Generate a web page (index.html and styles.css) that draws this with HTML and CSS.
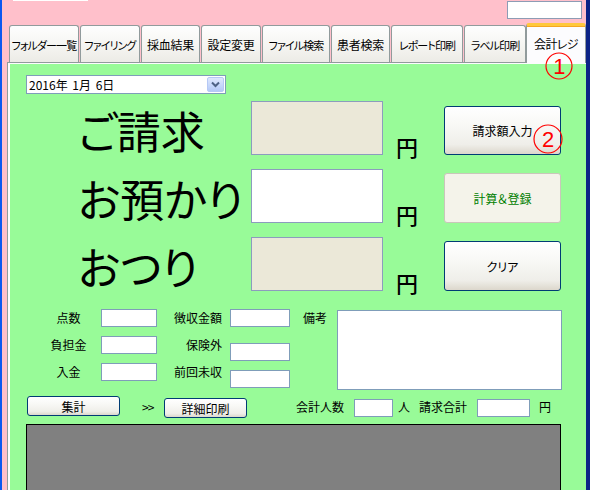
FILE: index.html
```html
<!DOCTYPE html>
<html lang="ja">
<head>
<meta charset="utf-8">
<title>会計レジ</title>
<link rel="stylesheet" href="styles.css">
</head>
<body>
<div class="frame-left"></div>
<div class="window">
  <div class="topbar">
    <div class="stub"></div>
    <div class="search"></div>
  </div>
  <div class="tabs">
    <div class="tab kana t1">フォルダー一覧</div>
    <div class="tab kana t2">ファイリング</div>
    <div class="tab t3">採血結果</div>
    <div class="tab t4">設定変更</div>
    <div class="tab kana t5">ファイル検索</div>
    <div class="tab t6">患者検索</div>
    <div class="tab kana t7">レポート印刷</div>
    <div class="tab kana t8">ラベル印刷</div>
    <div class="tab t9 active">会計レジ
      <svg class="mark mark1" width="30" height="30" viewBox="0 0 30 30"><circle cx="15" cy="15" r="13" fill="none" stroke="#f00" stroke-width="1.2"/><text x="15" y="23" text-anchor="middle" class="mark-num">1</text></svg>
    </div>
  </div>
  <div class="panel">
    <div class="datepick">
      <span class="date-text">2016年 1月 6日</span>
      <span class="drop"><svg width="15" height="13" viewBox="0 0 15 13"><polyline points="4,4.5 7.5,8 11,4.5" fill="none" stroke="#4d6185" stroke-width="2"/></svg></span>
    </div>

    <div class="register">
      <div class="big">ご請求</div>
      <div class="amount beige"></div>
      <div class="yen">円</div>
      <div class="btn big-btn b1">請求額入力
        <svg class="mark mark2" width="32" height="32" viewBox="0 0 32 32"><circle cx="16" cy="16" r="14" fill="none" stroke="#f00" stroke-width="1.2"/><text x="16" y="24" text-anchor="middle" class="mark-num">2</text></svg>
      </div>

      <div class="big">お預かり</div>
      <div class="amount white"></div>
      <div class="yen">円</div>
      <div class="btn big-btn disabled">計算＆登録</div>

      <div class="big">おつり</div>
      <div class="amount beige"></div>
      <div class="yen">円</div>
      <div class="btn big-btn">クリア</div>
    </div>

    <div class="details">
      <div class="lab-a">点数</div>
      <div class="field"></div>
      <div class="lab-b">徴収金額</div>
      <div class="field"></div>
      <div class="lab-c">備考</div>
      <div class="memo"></div>

      <div class="lab-a">負担金</div>
      <div class="field"></div>
      <div class="lab-b">保険外</div>
      <div class="field low"></div>

      <div class="lab-a">入金</div>
      <div class="field"></div>
      <div class="lab-b">前回未収</div>
      <div class="field low"></div>
    </div>

    <div class="bottom">
      <div class="btn small-btn sum">集計</div>
      <div class="arrows">&gt;&gt;</div>
      <div class="btn small-btn print">詳細印刷</div>
      <div class="txt count-lab">会計人数</div>
      <div class="field count"></div>
      <div class="txt person">人</div>
      <div class="txt total-lab">請求合計</div>
      <div class="field total"></div>
      <div class="txt total-yen">円</div>
    </div>

    <div class="grid-area"></div>
  </div>
</div>
<div class="frame-right"></div>
</body>
</html>
```

FILE: styles.css
```css
html, body {
  margin: 0;
  padding: 0;
}
body {
  width: 590px;
  height: 490px;
  overflow: hidden;
  display: flex;
  background: #ffc0cb;
  font-family: "Noto Sans CJK JP", "Noto Sans", sans-serif;
  font-size: 12px;
  color: #000;
}
.frame-left {
  width: 2px;
  background: #0b58f0;
  flex: none;
}
.frame-right {
  width: 4px;
  background: #0c2386;
  flex: none;
}
.window {
  flex: 1;
  display: flex;
  flex-direction: column;
  min-width: 0;
}
.topbar {
  height: 23px;
  display: flex;
  align-items: flex-start;
  flex: none;
}
.stub {
  margin-left: 11px;
  width: 75px;
  height: 1px;
  background: #fff;
}
.search {
  margin-left: auto;
  margin-right: 4px;
  margin-top: 1px;
  width: 75px;
  height: 18px;
  box-sizing: border-box;
  border: 1px solid #8d9cb5;
  background: #fff;
}
.tabs {
  height: 39px;
  flex: none;
  display: flex;
  align-items: flex-end;
  padding-left: 7px;
}
.tab {
  box-sizing: border-box;
  height: 37px;
  margin-right: 1px;
  border: 1px solid #919b9c;
  border-bottom: none;
  border-radius: 3px 3px 0 0;
  background: linear-gradient(180deg, #fefefe 0%, #f7f7f4 45%, #ecebe6 100%);
  display: flex;
  align-items: center;
  justify-content: center;
  font-size: 12px;
  letter-spacing: -0.3px;
  font-feature-settings: "palt";
  white-space: nowrap;
  flex: none;
  padding-top: 1px;
}
.tab.kana {
  font-size: 11px;
  letter-spacing: -0.9px;
}
.t1 { width: 70px; }
.t2 { width: 60px; }
.t3 { width: 59px; }
.t4 { width: 60px; }
.t5 { width: 68px; }
.t6 { width: 59px; }
.t7 { width: 72px; }
.t8 { width: 62px; }
.t9 { width: 60px; }
.tab.active {
  position: relative;
  z-index: 2;
  height: 40px;
  margin-left: -1px;
  margin-right: 0;
  margin-bottom: -1px;
  background: #fcfcfe;
  border-top: 3px solid #ffc83c;
  box-shadow: inset 0 1px 0 #f5a623;
  padding-top: 0;
  padding-bottom: 3px;
  letter-spacing: -0.6px;
}
.mark {
  position: absolute;
  overflow: visible;
}
.mark-num {
  font-family: "Liberation Sans", sans-serif;
  font-size: 22px;
  fill: #f00;
}
.mark1 {
  left: 17px;
  top: 25px;
}
.mark2 {
  left: 87px;
  top: 16px;
}
.panel {
  flex: 1;
  margin-left: 5px;
  border-top: 1px solid #919b9c;
  border-left: 1px solid #919b9c;
  background: #98fb98;
  box-shadow: inset 2px 1px 0 #fcfcfe;
  padding: 12px 0 0 18px;
  position: relative;
  z-index: 1;
}
.datepick {
  width: 200px;
  height: 19px;
  box-sizing: border-box;
  border: 1px solid #7f9db9;
  background: #fff;
  display: flex;
  align-items: center;
  padding-left: 2px;
}
.date-text {
  font-size: 12px;
  line-height: 17px;
  white-space: pre;
  font-feature-settings: "palt";
  word-spacing: 2px;
}
.drop {
  margin-left: auto;
  margin-right: 1px;
  width: 17px;
  height: 15px;
  box-sizing: border-box;
  border: 1px solid #b6c9f5;
  border-radius: 2px;
  background: linear-gradient(180deg, #dfe8fd 0%, #c5d6fb 60%, #b4c8f6 100%);
  display: flex;
  align-items: center;
  justify-content: center;
}
.register {
  margin-top: 7px;
  margin-left: 54px;
  display: grid;
  grid-template-columns: 171px 132px 61px 117px;
  grid-template-rows: 54px 54px 54px;
  row-gap: 14px;
}
.big {
  font-size: 44px;
  line-height: 54px;
  font-feature-settings: "palt";
  white-space: nowrap;
  padding-top: 2px;
  box-sizing: border-box;
  margin-left: -2px;
}
.amount {
  box-sizing: border-box;
  border: 1px solid #8c9cbd;
}
.beige { background: #ebe8d8; }
.white { background: #fff; }
.yen {
  align-self: end;
  padding-left: 13px;
  font-size: 22px;
  font-weight: 500;
  line-height: 24px;
  margin-bottom: -3px;
}
.btn {
  box-sizing: border-box;
  border: 1px solid #003c74;
  border-radius: 3px;
  background: linear-gradient(180deg, #ffffff 0%, #f8f8f5 40%, #efeee9 80%, #dcd7cc 100%);
  display: flex;
  align-items: center;
  justify-content: center;
  font-size: 12px;
  white-space: nowrap;
  font-feature-settings: "palt";
}
.big-btn {
  align-self: end;
  height: 50px;
  position: relative;
}
.b1 {
  height: 49px;
}
.disabled {
  border-color: #c9c7ba;
  background: #f4f3ea;
  color: #008000;
}
.details {
  margin-top: 18px;
  display: grid;
  grid-template-columns: 75px 56px 73px 60px 47px 225px;
  grid-template-rows: 18px 18px 18px;
  row-gap: 9px;
}
.lab-a, .lab-b, .lab-c, .txt, .arrows {
  font-size: 12px;
  line-height: 18px;
  white-space: nowrap;
}
.lab-a {
  grid-column: 1;
  padding-left: 10px;
  text-align: center;
}
.lab-b {
  text-align: right;
  padding-right: 8px;
}
.lab-c {
  padding-left: 13px;
}
.field {
  box-sizing: border-box;
  height: 18px;
  border: 1px solid #7f9db9;
  background: #fff;
}
.field.low {
  margin-top: 7px;
}
.memo {
  grid-column: 6;
  grid-row: 1 / span 3;
  align-self: start;
  margin-top: 1px;
  height: 80px;
  box-sizing: border-box;
  border: 1px solid #7f9db9;
  background: #fff;
}
.bottom {
  margin-top: 15px;
  height: 22px;
  display: flex;
  align-items: flex-start;
}
.small-btn {
  height: 20px;
  font-size: 12px;
}
.sum {
  margin-left: 1px;
  width: 93px;
}
.arrows {
  margin-left: 22px;
  width: 11px;
  line-height: 22px;
  letter-spacing: -1px;
}
.print {
  margin-left: 11px;
  margin-top: 2px;
  width: 83px;
}
.txt {
  line-height: 22px;
}
.count-lab { margin-left: 49px; }
.count {
  margin-left: 10px;
  margin-top: 3px;
  width: 39px;
}
.person { margin-left: 5px; }
.total-lab { margin-left: 9px; }
.total {
  margin-left: 10px;
  margin-top: 3px;
  width: 53px;
}
.total-yen { margin-left: 9px; }
.grid-area {
  margin-top: 6px;
  width: 535px;
  height: 90px;
  box-sizing: border-box;
  border: 1px solid #000;
  background: #808080;
}
```
